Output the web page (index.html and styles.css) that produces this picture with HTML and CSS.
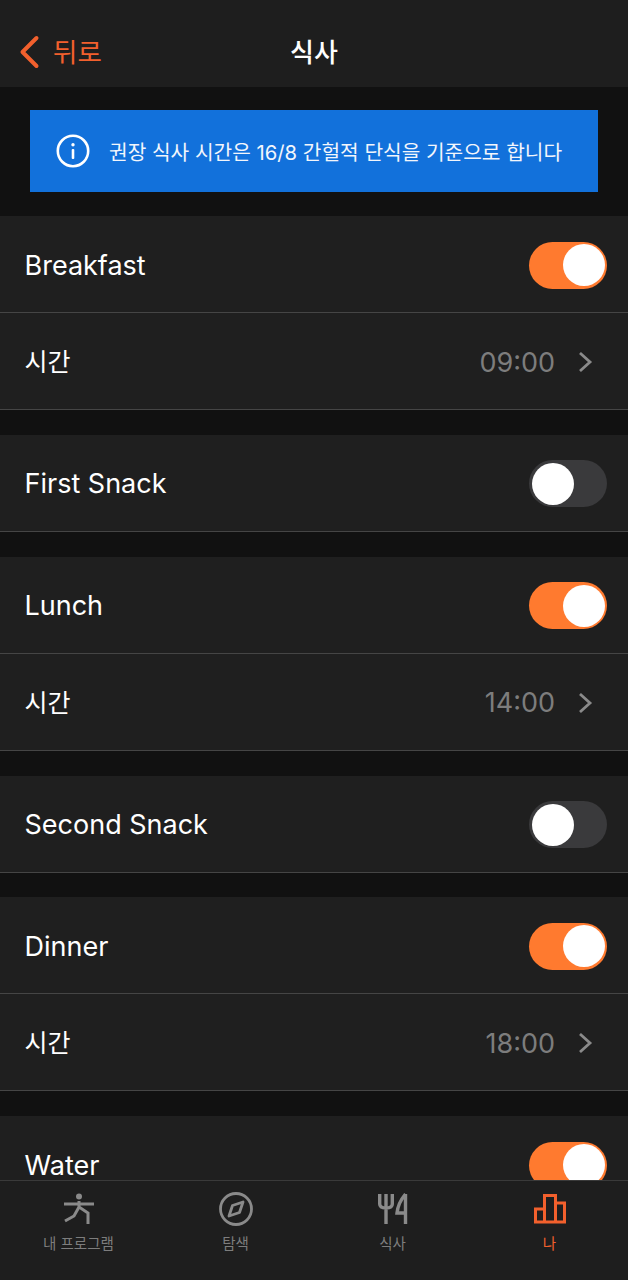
FILE: index.html

```html
<!DOCTYPE html>
<html lang="ko">
<head>
<meta charset="UTF-8">
<meta name="viewport" content="width=device-width, initial-scale=1.0">
<title>식사</title>
<link rel="stylesheet" href="styles.css">
</head>
<body>
<div class="screen">
    <header class="nav">
        <a class="back">
            <svg class="back-icon" width="22" height="34" viewBox="0 0 22 34"><path d="M17.5 3 L3.5 17 L17.5 31" fill="none" stroke="#f2602d" stroke-width="4" stroke-linecap="round" stroke-linejoin="round"/></svg>
            <span>뒤로</span>
        </a>
        <h1 class="nav-title">식사</h1>
    </header>

    <main class="content">
        <div class="banner">
            <svg width="34" height="34" viewBox="0 0 34 34"><circle cx="17" cy="17" r="15.2" fill="none" stroke="#fff" stroke-width="2.6"/><circle cx="17" cy="10.8" r="1.7" fill="#fff"/><rect x="15.7" y="15" width="2.6" height="10" rx="1" fill="#fff"/></svg>
            <p>권장 식사 시간은 16/8 간헐적 단식을 기준으로 합니다</p>
        </div>

        <section class="group">
            <div class="row"><span class="label">Breakfast</span><span class="switch on"></span></div>
            <div class="row"><span class="label ko">시간</span><span class="value">09:00</span><svg class="chevron" width="16" height="24" viewBox="0 0 16 24"><path d="M3 3 L13 12 L3 21" fill="none" stroke="#8a8a8a" stroke-width="2.8"/></svg></div>
        </section>

        <section class="group">
            <div class="row"><span class="label">First Snack</span><span class="switch"></span></div>
        </section>

        <section class="group">
            <div class="row"><span class="label">Lunch</span><span class="switch on"></span></div>
            <div class="row"><span class="label ko">시간</span><span class="value">14:00</span><svg class="chevron" width="16" height="24" viewBox="0 0 16 24"><path d="M3 3 L13 12 L3 21" fill="none" stroke="#8a8a8a" stroke-width="2.8"/></svg></div>
        </section>

        <section class="group">
            <div class="row"><span class="label">Second Snack</span><span class="switch"></span></div>
        </section>

        <section class="group">
            <div class="row"><span class="label">Dinner</span><span class="switch on"></span></div>
            <div class="row"><span class="label ko">시간</span><span class="value">18:00</span><svg class="chevron" width="16" height="24" viewBox="0 0 16 24"><path d="M3 3 L13 12 L3 21" fill="none" stroke="#8a8a8a" stroke-width="2.8"/></svg></div>
        </section>

        <section class="group">
            <div class="row"><span class="label">Water</span><span class="switch on"></span></div>
        </section>
    </main>

    <nav class="tabs">
        <a class="tab">
            <svg width="34" height="34" viewBox="0 0 34 34"><circle cx="17" cy="4.5" r="3" fill="#8a8a8a"/><path d="M2 12 H32 M17 9 V15 L26 21 V32 M17 15 L12 24 L3 29" fill="none" stroke="#8a8a8a" stroke-width="3"/></svg>
            <span>내 프로그램</span>
        </a>
        <a class="tab">
            <svg width="34" height="34" viewBox="0 0 34 34"><circle cx="17" cy="17" r="15.5" fill="none" stroke="#8a8a8a" stroke-width="2.8"/><path d="M24 10 L20.5 20.5 L10 24 L13.5 13.5 Z" fill="none" stroke="#8a8a8a" stroke-width="2.8" stroke-linejoin="round"/></svg>
            <span>탐색</span>
        </a>
        <a class="tab">
            <svg width="30" height="32" viewBox="0 0 30 32"><path d="M1.7 1 V11 Q1.7 15 8 15 Q14.3 15 14.3 11 V1 M8 1 V31" fill="none" stroke="#8a8a8a" stroke-width="3.4"/><path d="M27.5 1 V31 M27.5 1 Q20 10 19 20 H27.5" fill="none" stroke="#8a8a8a" stroke-width="3.4"/></svg>
            <span>식사</span>
        </a>
        <a class="tab active">
            <svg width="32" height="30" viewBox="0 0 32 30"><path d="M1.5 28 V15 H10.5 V28 Z M10.5 28 V1.5 H21.5 V28 Z M21.5 28 V9 H30.5 V28 Z" fill="none" stroke="#f2602d" stroke-width="3"/></svg>
            <span>나</span>
        </a>
    </nav>
</div>
</body>
</html>
```

FILE: styles.css

```css
* {
    box-sizing: border-box;
}

body {
    margin: 0;
    background-color: #111111;
    font-family: Inter, "Noto Sans CJK KR", sans-serif;
    color: #fff;
}

.screen {
    width: 628px;
    height: 1280px;
    display: flex;
    flex-direction: column;
    overflow: hidden;
}

.nav {
    height: 87px;
    flex-shrink: 0;
    background-color: #1e1e1e;
    display: flex;
    align-items: center;
    justify-content: center;
    position: relative;
}

.back {
    position: absolute;
    left: 19px;
    top: 34px;
    display: flex;
    align-items: center;
    gap: 12px;
    color: #f2602d;
    font-size: 26.5px;
    line-height: 36px;
}

.nav-title {
    margin: 0;
    font-size: 26px;
    font-weight: 500;
    padding-top: 14px;
}

.content {
    flex: 1;
    min-height: 0;
    overflow: hidden;
    padding-top: 23px;
}

.banner {
    width: 568px;
    height: 82px;
    margin: 0 30px 24px;
    background-color: #1271db;
    display: flex;
    align-items: center;
    gap: 19px;
    padding-left: 26px;
}

.banner p {
    margin: 0;
    font-size: 20.25px;
    color: #f2f6fc;
}

.group {
    margin-bottom: 24.85px;
}

.row {
    height: 97px;
    background-color: #1f1f1f;
    border-bottom: 1px solid #454545;
    display: flex;
    align-items: center;
    padding: 2px 21px 0 24.5px;
}

.label {
    flex: 1;
    font-size: 27px;
}

.label.ko {
    font-size: 25px;
    line-height: 36px;
}

.value {
    color: #7d7d7d;
    font-size: 27px;
    margin-right: 22px;
}

.chevron {
    margin-right: 14px;
}

.switch {
    width: 78px;
    height: 47px;
    border-radius: 24px;
    background-color: #3a3a3c;
    position: relative;
}

.switch::after {
    content: "";
    position: absolute;
    left: 3px;
    top: 2.5px;
    width: 42px;
    height: 42px;
    border-radius: 50%;
    background-color: #fff;
}

.switch.on {
    background-color: #ff7a2f;
}

.switch.on::after {
    left: 33.5px;
}

.tabs {
    height: 100px;
    flex-shrink: 0;
    background-color: #1e1e1e;
    border-top: 1px solid #3a3a3a;
    display: grid;
    grid-template-columns: 157px 157px 157px 157px;
}

.tab {
    display: flex;
    flex-direction: column;
    align-items: center;
    gap: 7px;
    padding-top: 11px;
    color: #7d7d7d;
    font-size: 14.5px;
    line-height: 22px;
}

.tab svg {
    height: 34px;
}

.tab.active {
    color: #f2602d;
}
```
